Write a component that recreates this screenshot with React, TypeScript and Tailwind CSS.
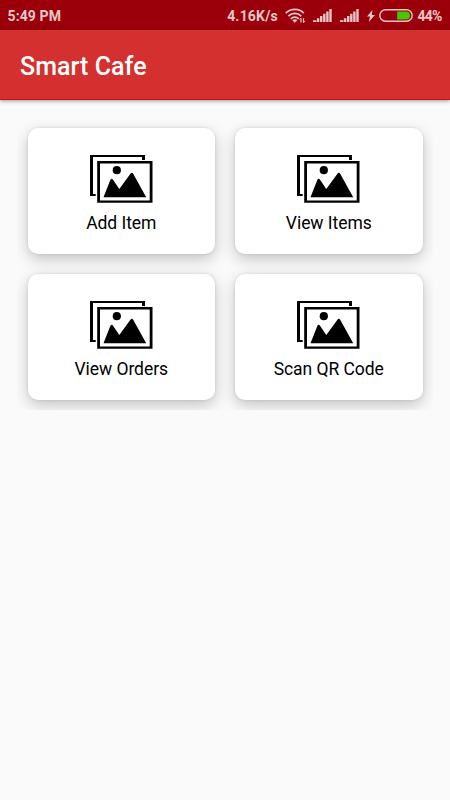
const items = ['Add Item', 'View Items', 'View Orders', 'Scan QR Code'];

function WifiIcon() {
  return (
    <svg width="21" height="16" viewBox="0 0 21 16" fill="none" stroke="currentColor" strokeWidth="1.8">
      <path d="M0.8 5.2C5.8 0.2 14 0.2 18.8 5.2" />
      <path d="M3.4 8.1C7 4.5 12.6 4.5 16.2 8.1" />
      <path d="M5.9 10.8C8.2 8.5 11.4 8.5 13.7 10.8" />
      <path d="M7.2 12.2C8.7 10.9 10.9 10.9 12.4 12.2L9.8 14.8Z" fill="currentColor" stroke="none" />
      <path d="M16 10.2v4.3M18.5 10.2v4.3" strokeWidth="1.2" />
      <path d="M14.6 11.8L16 10.2M18.5 14.5L20 12.9" strokeWidth="0.9" />
    </svg>
  );
}

function SignalIcon() {
  return (
    <svg width="19" height="13" viewBox="0 0 19 13" fill="currentColor">
      <path d="M0 11.3h3.4V13H0zM3.9 9.2h2.4V13H3.9zM7 7h2.4v6H7zM10.1 4.7h2.4V13h-2.4zM13.2 2.4h2.4V13h-2.4zM16.3 0h2.4v13h-2.4z" />
    </svg>
  );
}

function StatusBar() {
  return (
    <div className="flex h-[30px] items-center bg-[#9b000a] pt-[2px] pr-[8px] pl-[7.5px] text-[14px] font-bold text-[#e9c6c8]">
      <span className="tracking-[0.1px]">5:49 PM</span>
      <div className="ml-auto flex items-center">
        <span className="tracking-[0.2px]">4.16K/s</span>
        <span className="ml-[7px]"><WifiIcon /></span>
        <span className="-mt-px ml-[7px]"><SignalIcon /></span>
        <span className="-mt-px ml-[8px]"><SignalIcon /></span>
        <svg className="-mt-px ml-[8px]" width="8" height="12" viewBox="0 0 8 12" fill="currentColor">
          <path d="M5.5 0L0 6.6h3L1.8 12L8 5H4.8Z" />
        </svg>
        <svg className="-mt-[2px] ml-[3.5px] shrink-0" width="34" height="13" viewBox="0 0 34 13">
          <rect x="0.8" y="0.8" width="32.4" height="11.4" rx="5.7" fill="none" stroke="currentColor" strokeWidth="1.4" />
          <path d="M18.2 2.5H27a4 4 0 0 1 0 8h-8.8z" fill="#49c500" />
        </svg>
        <span className="ml-[5px] w-[24.5px] tracking-[-0.8px]">44%</span>
      </div>
    </div>
  );
}

function GalleryIcon() {
  return (
    <svg width="63" height="48" viewBox="0 0 63 48">
      <path d="M0 0H55V5H52V2H3V39H5.7V41H0Z" />
      <path fillRule="evenodd" d="M7.2 6H62.5V47.7H7.2ZM10 8.4V45.5H59.7V8.4Z" />
      <circle cx="26.8" cy="15.2" r="4.1" />
      <path d="M13.5 42.3L20.3 25Q21.6 22.6 23.2 25L29.3 34L40.6 18.5Q42 17 43.2 18.8L56.2 42.3Z" />
    </svg>
  );
}

function MenuCard({ label }: { label: string }) {
  return (
    <button className="flex h-[126.25px] flex-col items-center rounded-[10px] bg-white pt-[27px] shadow-[0_5px_15px_rgba(0,0,0,0.22),0_0_3px_rgba(0,0,0,0.12)]">
      <GalleryIcon />
      <span className="mt-[8px] text-[17.5px] leading-6 tracking-[-0.05px] text-black">{label}</span>
    </button>
  );
}

export default function App() {
  return (
    <div className="min-h-screen bg-[#fafafa] font-['Roboto',sans-serif]">
      <StatusBar />
      <header className="relative flex h-[70px] items-center border-b border-[#cb0d12] bg-[#d3302f] pt-[4px] pl-5 shadow-[0_1px_4px_rgba(0,0,0,0.4)]">
        <h1 className="text-[25px] font-medium tracking-[0.05px] text-white">Smart Cafe</h1>
      </header>
      <main className="mx-[17px] mt-[17px] grid h-[293px] grid-cols-2 content-start gap-5 overflow-hidden px-[10.5px] pt-[10.5px]">
        {items.map((label) => (
          <MenuCard key={label} label={label} />
        ))}
      </main>
    </div>
  );
}
